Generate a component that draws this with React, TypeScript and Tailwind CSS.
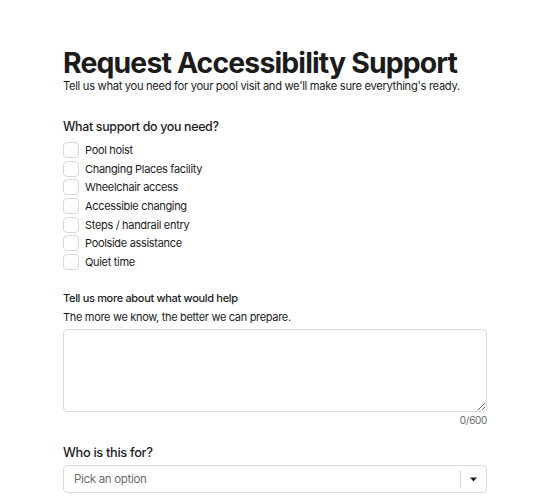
import React from 'react'

const options = [
  'Pool hoist',
  'Changing Places facility',
  'Wheelchair access',
  'Accessible changing',
  'Steps / handrail entry',
  'Poolside assistance',
  'Quiet time',
]

export default function App() {
  return (
    <div className="min-h-screen bg-white text-[#1c1c1c] font-['Inter',sans-serif] tracking-[-0.02em]">
      <div className="mx-auto w-[424px] pt-[47px]">
        <h1 className="text-[28.4px] font-bold leading-[31px] tracking-[-0.03em]">Request Accessibility Support</h1>
        <p className="text-[11.2px] leading-[16px]">
          Tell us what you need for your pool visit and we'll make sure everything's ready.
        </p>

        <fieldset className="mt-[24px]">
          <legend className="text-[12.4px] font-medium leading-[18px]">What support do you need?</legend>
          <div className="mt-[5px] flex flex-col">
            {options.map((o) => (
              <label key={o} className="flex h-[18.6px] items-center gap-[6px]">
                <span className="h-4 w-4 shrink-0 rounded-[4px] border border-[#d6d6db] bg-white" />
                <span className="text-[11px] leading-[16px]">{o}</span>
              </label>
            ))}
          </div>
        </fieldset>

        <div className="mt-[19px]">
          <div className="text-[11px] font-medium leading-[16px]">Tell us more about what would help</div>
          <div className="mt-[3px] text-[11px] leading-[16px]">The more we know, the better we can prepare.</div>
          <textarea className="mt-[4px] block h-[83px] w-full resize-y rounded-[4px] border border-[#d9d9de] bg-white" />
          <div className="mt-[1px] text-right text-[10px] leading-[14px] text-[#666]">0/600</div>
        </div>

        <div className="mt-[17px]">
          <div className="text-[12.8px] font-medium leading-[18px]">Who is this for?</div>
          <div className="mt-[3px] flex h-[28px] items-center rounded-[4px] border border-[#d9d9de]">
            <span className="flex-1 pl-[10px] text-[11.5px] text-[#6b6b6b]">Pick an option</span>
            <span className="h-[18px] w-px bg-[#d9d9de]" />
            <span className="flex w-[25px] justify-center">
              <svg width="7" height="5" viewBox="0 0 7 5">
                <path d="M0 0.5h7L3.5 4.5z" fill="#1c1c1c" />
              </svg>
            </span>
          </div>
        </div>
      </div>
    </div>
  )
}
